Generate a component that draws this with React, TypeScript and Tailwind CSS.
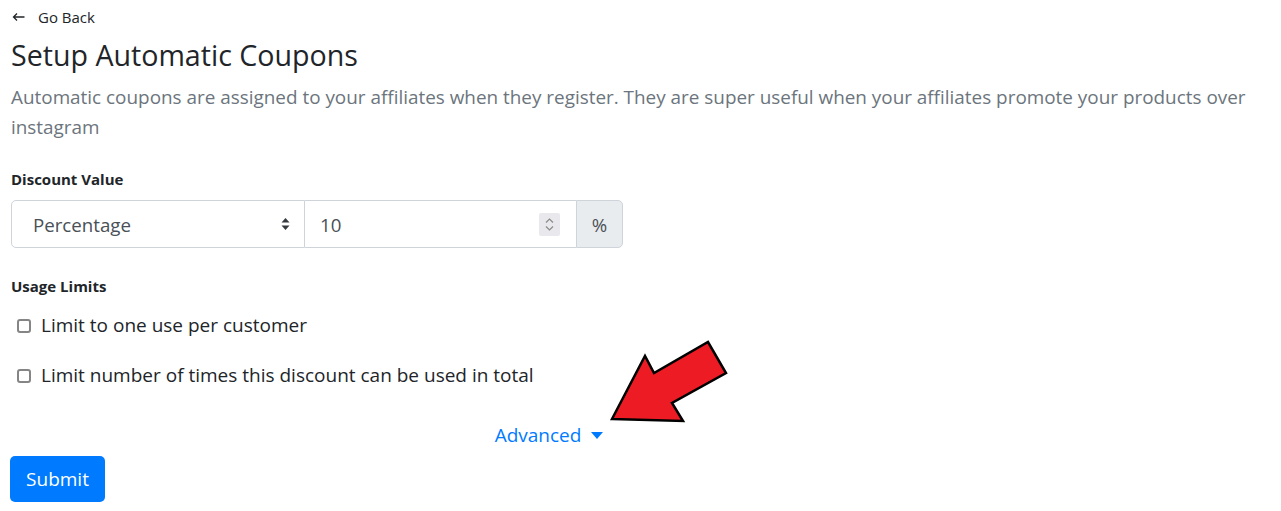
import React from 'react';

const font = { fontFamily: '"Open Sans", "Noto Sans", sans-serif' };

function CheckRow({ label }: { label: string }) {
  return (
    <label className="flex items-center gap-[10px] pl-[6px] text-[19px] text-[#212529] leading-[27px]">
      <span className="w-[14px] h-[14px] rounded-[3px] border-2 border-[#858585] bg-white shrink-0" />
      {label}
    </label>
  );
}

export default function App() {
  return (
    <div className="relative w-[1281px] h-[511px] bg-white overflow-hidden px-[11px]" style={font}>
      {/* back link */}
      <div className="flex items-center gap-[13px] pt-[6px] h-[28px] pl-px text-[15px] text-[#212529]">
        <svg width="13" height="10" viewBox="0 0 13 10" fill="none" stroke="#212529" strokeWidth="1.3">
          <path d="M12.5 5H1.5M5 1.5L1.5 5L5 8.5" />
        </svg>
        <span>Go Back</span>
      </div>

      <h3 className="text-[28.6px] leading-[34px] text-[#212529] mt-[10px]">Setup Automatic Coupons</h3>
      <p className="text-[18.9px] leading-[30px] text-[#6c757d] mt-[10px]">
        Automatic coupons are assigned to your affiliates when they register. They are super useful when your affiliates promote your products over instagram
      </p>

      <div className="mt-[26px] text-[15px] font-bold text-[#212529] leading-[22px]">Discount Value</div>
      <div className="mt-[10px] flex w-[612px] h-[48px] text-[18.7px] text-[#495057]">
        <div className="w-[294px] flex items-center justify-between pl-[21px] pr-[14px] border border-[#ced4da] rounded-l-[5px]">
          <span className="pt-[3px]">Percentage</span>
          <svg width="9" height="12" viewBox="0 0 9 12" fill="#343a40">
            <path d="M4.5 0L8.5 4.5H0.5Z M4.5 12L0.5 7.5H8.5Z" />
          </svg>
        </div>
        <div className="flex-1 flex items-center justify-between pl-[15px] pr-[16px] border-y border-[#ced4da]">
          <span className="pt-[3px]">10</span>
          <div className="w-[21px] h-[23px] bg-[#e9e9ed] rounded-[2px] flex flex-col items-center justify-center gap-[3px]">
            <svg width="9" height="5" viewBox="0 0 9 5" fill="none" stroke="#8a8a8a" strokeWidth="1.2"><path d="M1 4.5L4.5 1L8 4.5" /></svg>
            <svg width="9" height="5" viewBox="0 0 9 5" fill="none" stroke="#8a8a8a" strokeWidth="1.2"><path d="M1 0.5L4.5 4L8 0.5" /></svg>
          </div>
        </div>
        <div className="w-[47px] flex items-center justify-center pt-[3px] bg-[#e9ecef] border border-[#ced4da] rounded-r-[5px]">%</div>
      </div>

      <div className="mt-[27px] text-[15px] font-bold text-[#212529] leading-[22px]">Usage Limits</div>
      <div className="mt-[15px] flex flex-col gap-[23px]">
        <CheckRow label="Limit to one use per customer" />
        <CheckRow label="Limit number of times this discount can be used in total" />
      </div>

      <div className="w-[1076px] flex justify-center mt-[31px]">
        <button className="flex items-center gap-[10px] text-[19px] text-[#007bff] leading-[30px]">
          Advanced
          <svg width="12" height="7" viewBox="0 0 12 7" fill="#007bff"><path d="M0 0H12L6 7Z" /></svg>
        </button>
      </div>

      <button className="mt-[6px] h-[46px] w-[95px] -ml-px rounded-[5px] bg-[#007bff] text-white text-[19px]">Submit</button>

      {/* annotation arrow */}
      <svg className="absolute left-0 top-0 pointer-events-none" width="1281" height="511">
        <polygon
          points="612,419 683,421 672,403 726,373 708,342 654,373 645,356"
          fill="#ed1c24"
          stroke="#000"
          strokeWidth="2.5"
          strokeLinejoin="miter"
        />
      </svg>
    </div>
  );
}
